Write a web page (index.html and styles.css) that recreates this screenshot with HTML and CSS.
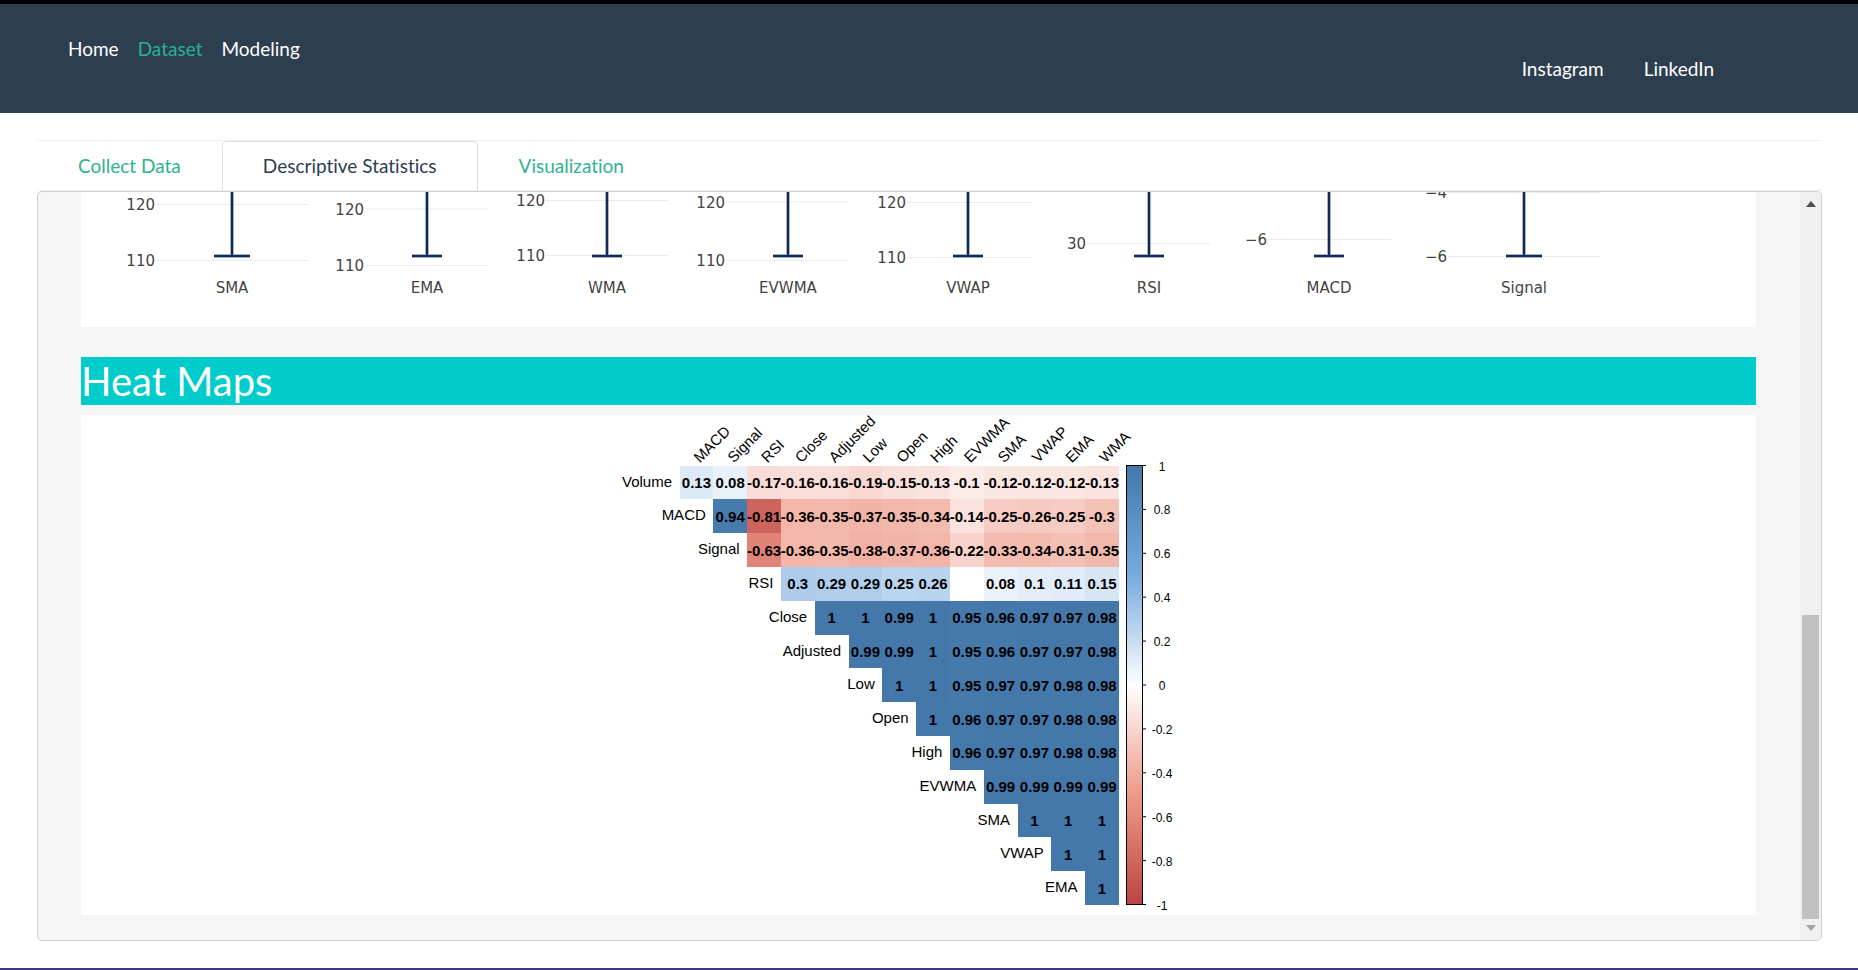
FILE: index.html
```html
<!DOCTYPE html>
<html lang="en">
<head>
<meta charset="utf-8">
<title>Dataset - Descriptive Statistics</title>
<link rel="stylesheet" href="styles.css">
</head>
<body>
<header class="topbar">
  <nav class="main-nav" aria-label="Main">
    <a href="#home">Home</a>
    <a href="#dataset" class="current">Dataset</a>
    <a href="#modeling">Modeling</a>
  </nav>
  <nav class="social-nav" aria-label="Social">
    <a href="#instagram">Instagram</a>
    <a href="#linkedin">LinkedIn</a>
  </nav>
</header>

<main class="content">
  <nav class="tabs" aria-label="Dataset sections">
    <a href="#collect" class="tab">Collect Data</a>
    <a href="#descriptive" class="tab active">Descriptive Statistics</a>
    <a href="#visualization" class="tab">Visualization</a>
  </nav>

  <div class="panel">
    <div class="panel-body">
      <section class="card card-plots">
        <svg id="boxplots" class="boxplots" viewBox="81 192 1675 135" role="img" aria-label="Box plots"></svg>
      </section>
      <h1 class="section-title">Heat Maps</h1>
      <section class="card card-heatmap">
        <svg id="heatmap" class="heatmap" viewBox="614 415 609 500" role="img" aria-label="Correlation heat map"></svg>
      </section>
    </div>
    <div class="scrollbar" aria-hidden="true">
      <svg class="arrow arrow-up" viewBox="0 0 10 6"><path d="M5 0 10 6H0Z"/></svg>
      <div class="track"><div class="thumb"></div></div>
      <svg class="arrow arrow-down" viewBox="0 0 10 6"><path d="M0 0H10L5 6Z"/></svg>
    </div>
  </div>
</main>
<footer class="bottom-line"></footer>
<script src="charts.js"></script>
</body>
</html>
```
FILE: styles.css
```css
* {
  box-sizing: border-box;
}

body {
  margin: 0;
  border-top: 4px solid #000;
  background: #fff;
  color: #2c3e50;
  font-family: Lato, "Liberation Sans", sans-serif;
  font-size: 19px;
  font-variant-ligatures: none;
  line-height: 30px;
}

a {
  color: inherit;
  text-decoration: none;
}

.topbar {
  display: flex;
  justify-content: space-between;
  padding: 30px 144px 29px 68px;
  background: #2d3e4f;
  color: #fff;
}

.main-nav {
  display: flex;
  gap: 19px;
}

.main-nav .current {
  color: #26b394;
}

.social-nav {
  display: flex;
  gap: 40px;
  padding-top: 20px;
}

.content {
  padding: 27px 36px 27px 37px;
}

.tabs {
  display: flex;
  border-top: 1px solid #ecf0f1;
  border-bottom: 1px solid #ecf0f1;
}

.tab {
  padding: 9px 40px;
  border: 1px solid transparent;
  border-bottom: 0;
  color: #2fb292;
}

.tab.active {
  border-color: #dcdfe0;
  border-radius: 5px 5px 0 0;
  background: #fff;
  color: #2c3e50;
}

.panel {
  display: flex;
  overflow: hidden;
  border: 1px solid #d0d0d0;
  border-radius: 5px;
  background: #f6f6f6;
}

.panel-body {
  flex: 1;
  min-width: 0;
  padding: 0 44px 25px 43px;
}

.card {
  background: #fff;
}

.card-plots {
  margin-bottom: 30px;
}

.boxplots {
  display: block;
  width: 100%;
  fill: #444;
  font-family: Verdana, "DejaVu Sans", sans-serif;
  font-size: 15px;
}

.boxplots .grid {
  stroke: #ebebeb;
}

.boxplots .whisker {
  fill: none;
  stroke: #0f2a5a;
  stroke-width: 2;
}

.boxplots .halo {
  fill: none;
  stroke: #0f2a5a;
  stroke-opacity: 0.35;
  stroke-width: 4;
}

.section-title {
  margin: 0 0 10px;
  background: #00cccc;
  color: #fff;
  font-size: 40px;
  font-weight: 400;
  line-height: 48px;
}

.card-heatmap {
  display: flex;
  justify-content: center;
}

.heatmap {
  overflow: visible;
  width: 609px;
  max-width: 100%;
  fill: #000;
  font-family: "Liberation Sans", Arial, sans-serif;
  font-size: 15px;
}

.heatmap .value {
  font-weight: 700;
  text-anchor: middle;
}

.heatmap .scale {
  font-size: 12px;
  text-anchor: middle;
}

.heatmap .outline {
  fill: none;
  stroke: #000;
}

.end {
  text-anchor: end;
}

.middle {
  text-anchor: middle;
}

.scrollbar {
  display: flex;
  flex-direction: column;
  align-items: center;
  width: 21px;
  padding: 9px 0;
  background: #f0f0f0;
}

.arrow {
  width: 10px;
  height: 6px;
}

.arrow-up {
  fill: #505050;
}

.arrow-down {
  fill: #a3a3a3;
}

.track {
  display: flex;
  flex: 1;
  align-items: flex-end;
  margin: 6px 0;
}

.thumb {
  width: 17px;
  height: 43%;
  background: #c1c1c1;
}

.bottom-line {
  height: 2px;
  background: #3c3782;
}
```
FILE: charts.js
```js
const NS = "http://www.w3.org/2000/svg";

function add(parent, tag, attrs, text) {
  const node = document.createElementNS(NS, tag);
  for (const key in attrs) node.setAttribute(key, attrs[key]);
  if (text !== undefined) node.textContent = text;
  parent.appendChild(node);
}

// Lower whiskers: name, centre, half cap width, grid start, grid end, ticks [label, y]
const plots = [
  ["SMA", 232, 18, 156, 308, [["120", 204.5], ["110", 260.5]]],
  ["EMA", 427, 15, 365, 488, [["120", 209], ["110", 265.5]]],
  ["WMA", 607, 15, 546, 669, [["120", 200.5], ["110", 255.5]]],
  ["EVWMA", 788, 15, 726, 849, [["120", 202], ["110", 260.5]]],
  ["VWAP", 968, 15, 907, 1031, [["120", 202.5], ["110", 257.5]]],
  ["RSI", 1149, 15, 1087, 1210, [["30", 243.5]]],
  ["MACD", 1329, 15, 1268, 1391, [["−6", 239.5]]],
  ["Signal", 1524, 18, 1448, 1600, [["−4", 192.5], ["−6", 256.5]]]
];
const box = document.getElementById("boxplots");
for (const [name, cx, cap, x1, x2, ticks] of plots) {
  for (const [label, y] of ticks) {
    add(box, "line", { class: "grid", x1, x2, y1: y, y2: y });
    add(box, "text", { class: "end", x: x1 - 1, y: y + 5.5 }, label);
  }
  const d = `M${cx} 192V256M${cx - cap} 256H${cx + cap}`;
  add(box, "path", { class: "halo", d });
  add(box, "path", { class: "whisker", d });
  add(box, "text", { class: "middle", x: cx, y: 293 }, name);
}

// Upper triangle of the correlation matrix
const names = ["Volume", "MACD", "Signal", "RSI", "Close", "Adjusted", "Low", "Open", "High", "EVWMA", "SMA", "VWAP", "EMA", "WMA"];
const rows = [
  [0.13, 0.08, -0.17, -0.16, -0.16, -0.19, -0.15, -0.13, -0.1, -0.12, -0.12, -0.12, -0.13],
  [0.94, -0.81, -0.36, -0.35, -0.37, -0.35, -0.34, -0.14, -0.25, -0.26, -0.25, -0.3],
  [-0.63, -0.36, -0.35, -0.38, -0.37, -0.36, -0.22, -0.33, -0.34, -0.31, -0.35],
  [0.3, 0.29, 0.29, 0.25, 0.26, null, 0.08, 0.1, 0.11, 0.15],
  [1, 1, 0.99, 1, 0.95, 0.96, 0.97, 0.97, 0.98],
  [0.99, 0.99, 1, 0.95, 0.96, 0.97, 0.97, 0.98],
  [1, 1, 0.95, 0.97, 0.97, 0.98, 0.98],
  [1, 0.96, 0.97, 0.97, 0.98, 0.98],
  [0.96, 0.97, 0.97, 0.98, 0.98],
  [0.99, 0.99, 0.99, 0.99],
  [1, 1, 1],
  [1, 1],
  [1]
];
const stops = [[187, 68, 68], [238, 153, 136], [255, 255, 255], [119, 170, 221], [68, 119, 170]];

function colour(value) {
  const position = (value + 1) * 2;
  const i = Math.min(3, Math.floor(position));
  const t = position - i;
  return `rgb(${stops[i].map((c, k) => Math.round(c + (stops[i + 1][k] - c) * t)).join(",")})`;
}

const map = document.getElementById("heatmap");
const left = 679.5, top0 = 465.5, size = 33.8;
rows.forEach((row, r) => {
  const y = top0 + r * size;
  row.forEach((value, k) => {
    if (value === null) return;
    const x = left + (r + k) * size;
    const fill = value >= 0.9 ? colour(Math.min(1, value + 0.03)) : colour(value);
    add(map, "rect", { x, y, width: size, height: size, fill, "shape-rendering": "crispEdges" });
  });
  add(map, "text", { class: "end", x: left + r * size - 7.5, y: y + 21 }, names[r]);
});
rows.forEach((row, r) => row.forEach((value, k) => {
  if (value === null) return;
  add(map, "text", { class: "value", x: left + (r + k + 0.5) * size, y: top0 + r * size + 22.5 }, value);
}));
names.slice(1).forEach((name, i) => {
  const x = left + (i + 0.5) * size + 3.5;
  add(map, "text", { transform: `translate(${x} 463.5) rotate(-45)` }, name);
});

const defs = document.createElementNS(NS, "defs");
map.appendChild(defs);
add(defs, "linearGradient", { id: "ramp", x1: 0, y1: 1, x2: 0, y2: 0 });
stops.forEach((rgb, i) => add(defs.firstChild, "stop", { offset: i / 4, "stop-color": `rgb(${rgb})` }));
add(map, "rect", { x: 1126.5, y: 465.5, width: 16, height: 439, fill: "url(#ramp)" });
add(map, "rect", { class: "outline", x: 1126.5, y: 465.5, width: 16, height: 439 });
["1", "0.8", "0.6", "0.4", "0.2", "0", "-0.2", "-0.4", "-0.6", "-0.8", "-1"].forEach((label, i) => {
  const y = 465.5 + i * 43.9;
  add(map, "path", { class: "outline", d: `M1142 ${y}H1146` });
  add(map, "text", { class: "scale", x: 1162, y: y + 5 }, label);
});
```
